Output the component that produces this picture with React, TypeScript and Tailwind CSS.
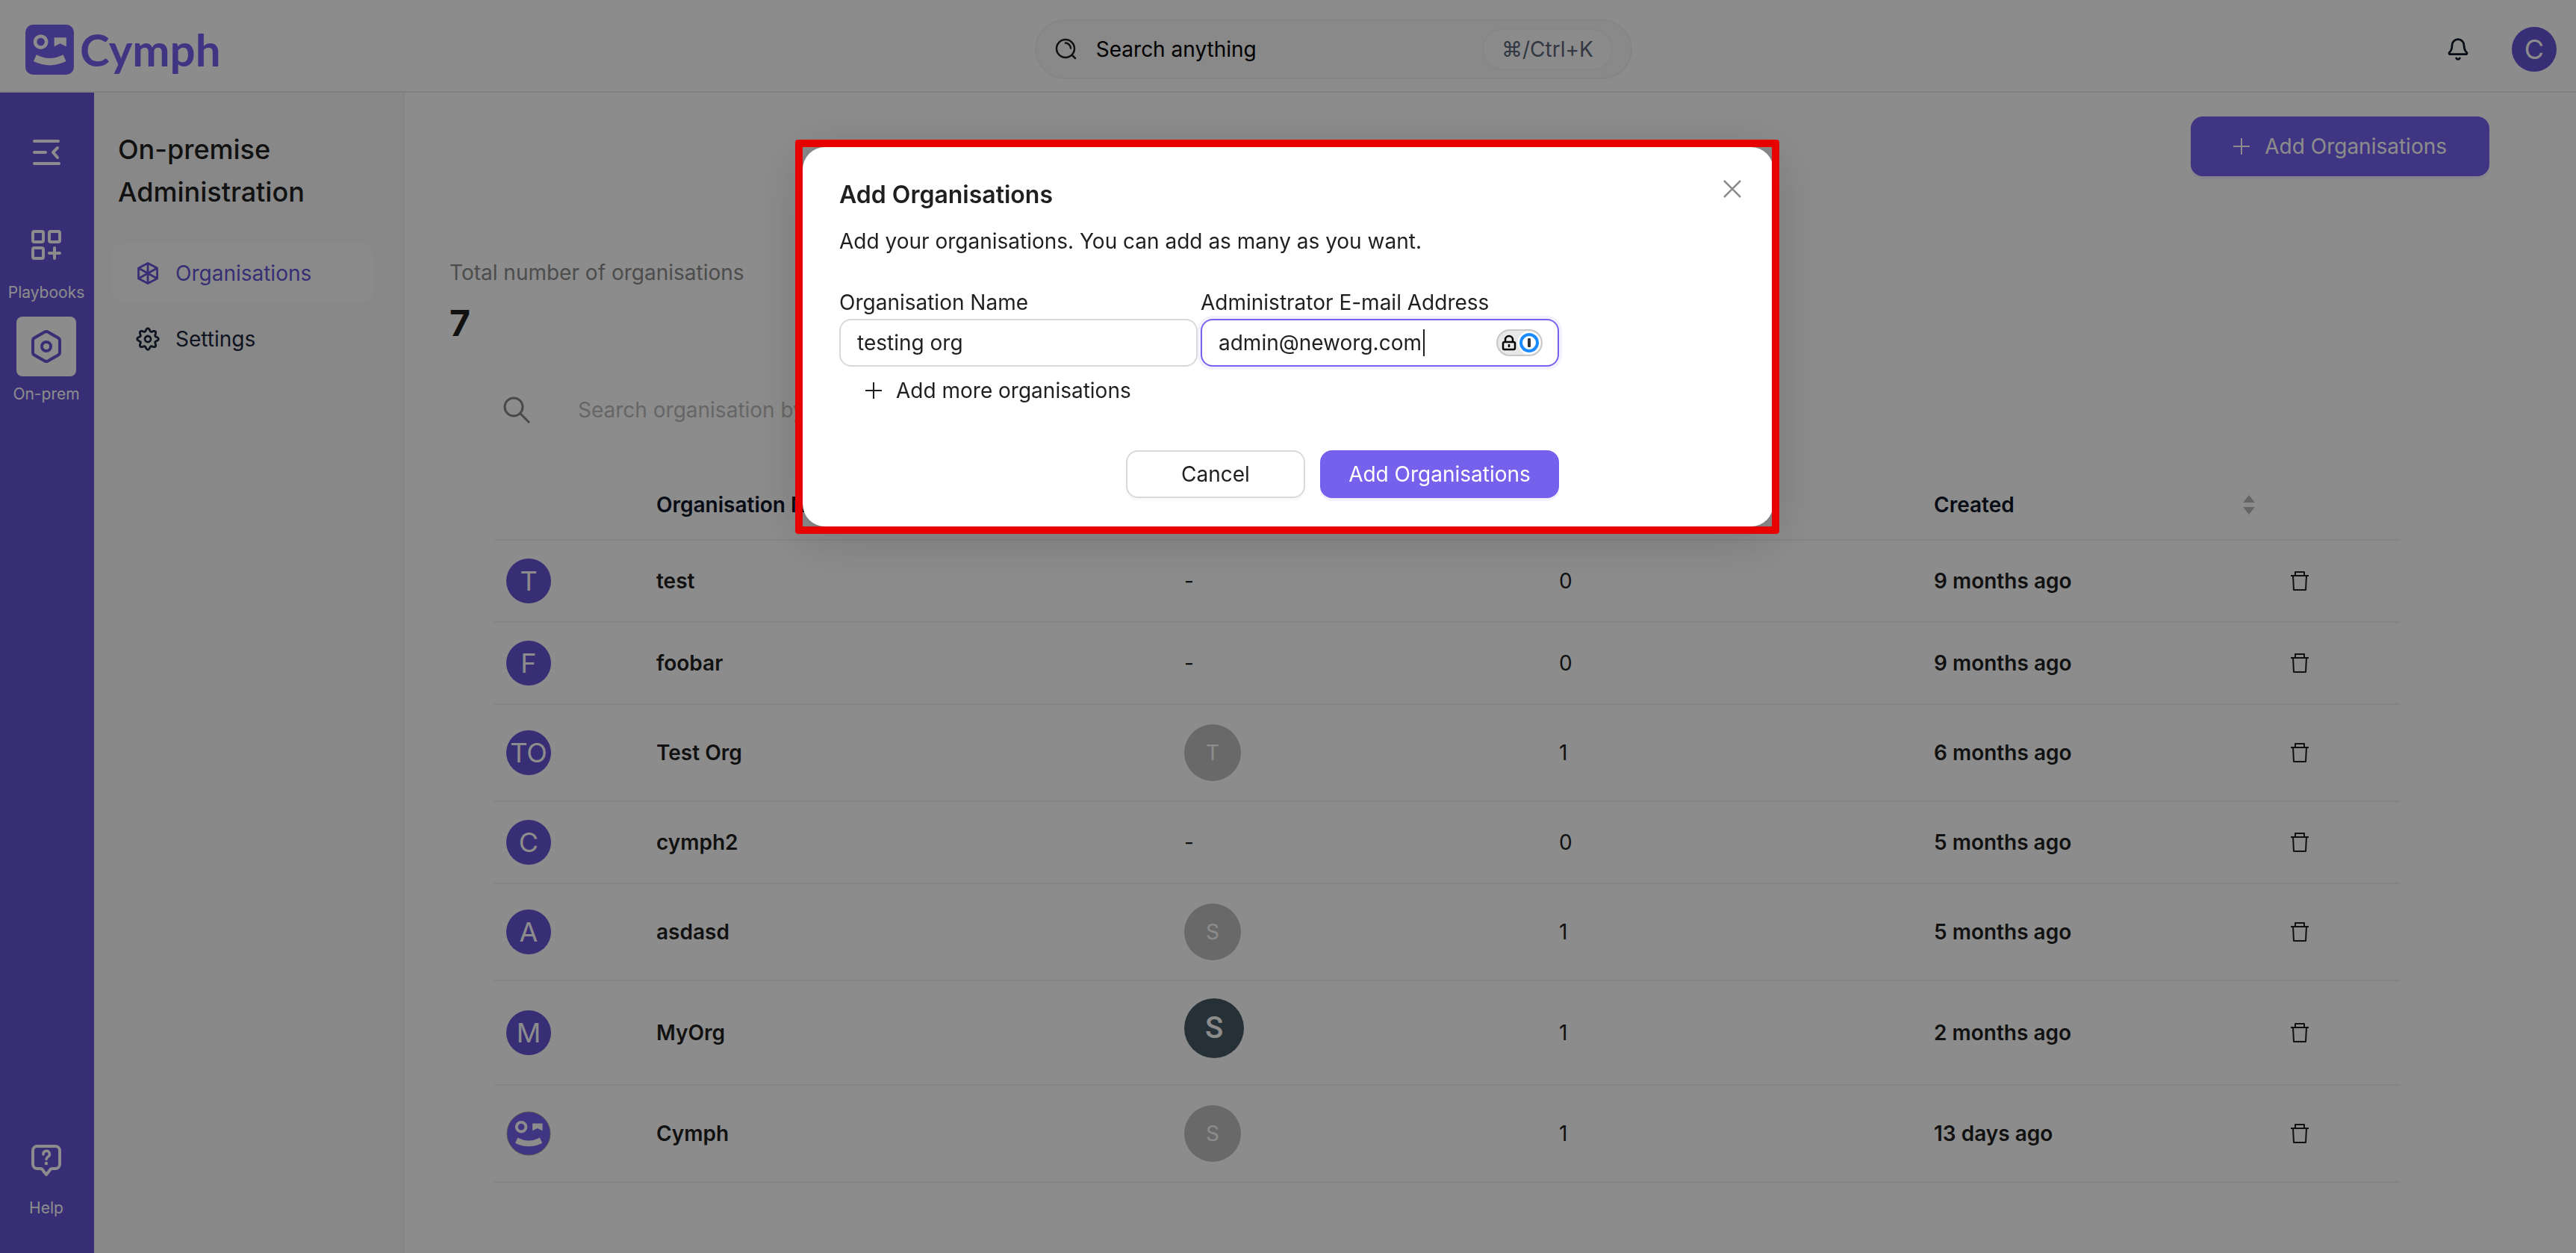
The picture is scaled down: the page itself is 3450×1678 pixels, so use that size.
import { Bell } from 'lucide-react';

type Organisation = {
    name: string;
    initials: string;
    logo?: boolean;
    member?: string;
    photo?: boolean;
    members: number;
    created: string;
    height: string;
};

const organisations: Organisation[] = [
    { name: 'test', initials: 'T', members: 0, created: '9 months ago', height: 'h-[110px]' },
    { name: 'foobar', initials: 'F', members: 0, created: '9 months ago', height: 'h-[110px]' },
    { name: 'Test Org', initials: 'TO', member: 'T', members: 1, created: '6 months ago', height: 'h-[130px]' },
    { name: 'cymph2', initials: 'C', members: 0, created: '5 months ago', height: 'h-[110px]' },
    { name: 'asdasd', initials: 'A', member: 'S', members: 1, created: '5 months ago', height: 'h-[130px]' },
    { name: 'MyOrg', initials: 'M', member: 'S', photo: true, members: 1, created: '2 months ago', height: 'h-[140px]' },
    { name: 'Cymph', initials: 'C', logo: true, member: 'S', members: 1, created: '13 days ago', height: 'h-[130px]' },
];

// eight soft teeth around the gear's rim
const gearPoints = Array.from({ length: 96 }, (_, i) => {
    const angle = (i / 96) * Math.PI * 2;
    const radius = 12.4 + 1.9 * Math.cos(8 * angle);
    return `${(16 + radius * Math.sin(angle)).toFixed(2)},${(16 - radius * Math.cos(angle)).toFixed(2)}`;
}).join(' ');

function Face() {
    return (
        <>
            <circle cx="57" cy="64" r="21" fill="none" stroke="#fff" strokeWidth="13" />
            <path d="M107 48h45v33l-23-11-22 11z" fill="#fff" />
            <path d="M41 112Q90 138 140 112L151 136Q90 166 30 136Z" fill="#fff" />
        </>
    );
}

function FoldIcon() {
    return (
        <svg className="size-10" viewBox="0 0 40 40" fill="none" stroke="currentColor" strokeWidth="4" strokeLinecap="round" strokeLinejoin="round">
            <path d="M4 5h32M4 20h15M4 35h33M35 14l-6 6 6 7" />
        </svg>
    );
}

function PlaybooksIcon() {
    return (
        <svg className="size-10" viewBox="0 0 40 40" fill="none" stroke="currentColor" strokeWidth="4" strokeLinecap="round">
            <rect x="2" y="2" width="14" height="14" rx="2" />
            <rect x="24" y="2" width="14" height="14" rx="2" />
            <rect x="2" y="24" width="14" height="14" rx="2" />
            <path d="M31 24v14M24 31h14" />
        </svg>
    );
}

function OnPremIcon() {
    return (
        <svg className="size-12" viewBox="0 0 24 24" fill="none" stroke="currentColor" strokeWidth="2">
            <path d="M21 16V8a2 2 0 0 0-1-1.73l-7-4a2 2 0 0 0-2 0l-7 4A2 2 0 0 0 3 8v8a2 2 0 0 0 1 1.73l7 4a2 2 0 0 0 2 0l7-4A2 2 0 0 0 21 16z" />
            <circle cx="12" cy="12" r="3" />
        </svg>
    );
}

function HelpIcon() {
    return (
        <svg className="w-10 h-[42px]" viewBox="0 0 40 42" fill="none" stroke="currentColor" strokeWidth="4" strokeLinecap="round" strokeLinejoin="round">
            <path d="M8 2h24a6 6 0 0 1 6 6v18a6 6 0 0 1-6 6h-4c-2 0-3 1-4 3l-4 5-4-5c-1-2-2-3-4-3H8a6 6 0 0 1-6-6V8a6 6 0 0 1 6-6z" />
            <path d="M16 13a4.200 4.200 0 1 1 6.500 3c-1.700 1.200-2.500 1.700-2.500 3.500" strokeWidth="3.500" />
            <circle cx="20" cy="25" r="2.300" fill="currentColor" stroke="none" />
        </svg>
    );
}

function OrganisationsIcon() {
    return (
        <svg className="size-8" viewBox="0 0 32 32" fill="none" stroke="currentColor" strokeWidth="2.800" strokeLinejoin="round">
            <path d="M16 2.500l12.500 6.500v14L16 29.500 3.500 23V9z" />
            <path d="M16 3v26M3.500 9l25 14M28.500 9l-25 14" />
        </svg>
    );
}

function SettingsIcon() {
    return (
        <svg className="size-8" viewBox="0 0 32 32" fill="none" stroke="currentColor" strokeWidth="2.800" strokeLinejoin="round">
            <polygon points={gearPoints} />
            <circle cx="16" cy="16" r="4" />
        </svg>
    );
}

function PlusIcon() {
    return (
        <svg className="size-[22px]" viewBox="0 0 22 22" fill="none" stroke="currentColor" strokeWidth="2">
            <path d="M11 0v22M0 11h22" />
        </svg>
    );
}

function TrashIcon() {
    return (
        <svg className="w-6 h-[26px]" viewBox="0 0 24 26" fill="none" stroke="currentColor" strokeWidth="2" strokeLinejoin="round">
            <path d="M0 6h24M6 6V1h12v5M3 6l1 19h16l1-19" />
        </svg>
    );
}

function Header() {
    return (
        <header className="h-[124px] pt-2.5 pl-[34px] pr-[26px] flex items-center justify-between border-b-2 border-[#ececec] bg-white">
            <a href="#" className="flex items-center gap-2 text-[#7661ed]">
                <svg className="w-[65px] h-[67px]" viewBox="0 0 180 186">
                    <rect width="180" height="186" rx="28" fill="#7661ed" />
                    <Face />
                </svg>
                <span className="font-['Lato'] text-[60px] leading-[64px] font-bold">Cymph</span>
            </a>
            {/* global search */}
            <button className="w-[800px] h-20 pl-6 pr-6 flex items-center rounded-full border-2 border-[#f2f2f2] bg-[#f9f9f9] text-black">
                <svg className="size-8" viewBox="0 0 32 32" fill="none" stroke="#1f1f1f" strokeWidth="2.500" strokeLinecap="round">
                    <circle cx="15" cy="15" r="12" />
                    <path d="M24 24l4 4M15 7.500a7.500 7.500 0 0 1 7 7" />
                </svg>
                <span className="ml-6">Search anything</span>
                <kbd className="ml-auto h-14 px-6 flex items-center rounded-full border-2 border-[#f4f4f4] bg-[#fefefe] font-['Inter','DejaVu_Sans',sans-serif] text-[#5d6578]">⌘/Ctrl+K</kbd>
            </button>
            <div className="flex items-center gap-14">
                <button aria-label="Notifications" className="text-[#0b1427]">
                    <Bell className="size-8" />
                </button>
                <button className="size-[60px] rounded-full bg-[#6655d5] text-white text-4xl">C</button>
            </div>
        </header>
    );
}

function Sidebar() {
    return (
        <nav className="w-[126px] shrink-0 pt-10 pb-11 pr-0.5 flex flex-col items-center bg-[#6655d5] text-white text-[21px] leading-8">
            <button aria-label="Collapse" className="mb-11 size-20 flex items-center justify-center">
                <FoldIcon />
            </button>
            <a href="#" className="mb-4 flex flex-col items-center gap-2">
                <span className="size-20 flex items-center justify-center">
                    <PlaybooksIcon />
                </span>
                Playbooks
            </a>
            <a href="#" className="flex flex-col items-center gap-2">
                <span className="size-20 flex items-center justify-center rounded-lg bg-white text-[#6655d5]">
                    <OnPremIcon />
                </span>
                On-prem
            </a>
            <a href="#" className="mt-auto flex flex-col items-center gap-2">
                <span className="size-20 flex items-center justify-center">
                    <HelpIcon />
                </span>
                Help
            </a>
        </nav>
    );
}

function AdminMenu() {
    return (
        <aside className="w-[416px] shrink-0 px-6 pt-12 border-r-2 border-[#f0f0f0] bg-[#f7f7f7]">
            <h1 className="px-2 text-4xl leading-[57px] font-medium text-[#1f1f1f]">
                On-premise Administration
            </h1>
            <ul className="mt-10 mr-4 flex flex-col gap-2">
                <li>
                    <a href="#" className="h-20 px-8 flex items-center gap-[21px] rounded-2xl bg-[#fcfcfc] text-[#6655d5]">
                        <OrganisationsIcon />
                        Organisations
                    </a>
                </li>
                <li>
                    <a href="#" className="h-20 px-8 flex items-center gap-[21px] text-[#1a253b]">
                        <SettingsIcon />
                        Settings
                    </a>
                </li>
            </ul>
        </aside>
    );
}

function OrganisationsTable() {
    return (
        <table className="w-full table-fixed text-left text-[#1f1f1f]">
            <colgroup>
                <col className="w-[201px]" />
                <col />
                <col className="w-[502px]" />
                <col className="w-[502px]" />
                <col className="w-[462px]" />
                <col className="w-[178px]" />
            </colgroup>
            <thead className="text-[#0b1427]">
                <tr className="h-[94px] border-b-2 border-[#f0f0f0]">
                    <th />
                    <th className="px-4 font-semibold">Organisation Name</th>
                    <th />
                    <th />
                    <th className="px-4 font-semibold">
                        <span className="flex items-center justify-between">
                            Created
                            <svg className="w-4 h-[26px]" viewBox="0 0 16 26" fill="#b8b8b8">
                                <path d="M8 0l8 10H0zM8 26l8-10H0z" />
                            </svg>
                        </span>
                    </th>
                    <th />
                </tr>
            </thead>
            <tbody>
                {organisations.map((org) => (
                    <tr key={org.name} className={`${org.height} border-b-2 border-[#f0f0f0]`}>
                        <td className="px-4">
                            {org.logo ? (
                                <svg className="size-[60px]" viewBox="0 0 60 60">
                                    <circle cx="30" cy="30" r="29" fill="#7661ed" stroke="#9c9c9c" strokeWidth="1" />
                                    <g transform="translate(3 2) scale(.3)">
                                        <Face />
                                    </g>
                                </svg>
                            ) : (
                                <span className="size-[60px] flex items-center justify-center rounded-full bg-[#6655d5] text-white text-4xl">
                                    {org.initials}
                                </span>
                            )}
                        </td>
                        <td className="px-4 font-semibold">{org.name}</td>
                        <td className="px-4">
                            {!org.member && '-'}
                            {org.member && !org.photo && (
                                <span className="size-[76px] flex items-center justify-center rounded-full bg-[#bfbfbf] text-white">
                                    {org.member}
                                </span>
                            )}
                            {org.member && org.photo && (
                                <span className="size-20 mb-3 flex items-center justify-center rounded-full bg-[#455a64] text-white text-[40px] font-medium font-['Roboto']">
                                    {org.member}
                                </span>
                            )}
                        </td>
                        <td className="px-4">{org.members}</td>
                        <td className="px-4 font-semibold">{org.created}</td>
                        <td className="px-8">
                            <button aria-label={`Delete ${org.name}`} className="block">
                                <TrashIcon />
                            </button>
                        </td>
                    </tr>
                ))}
            </tbody>
        </table>
    );
}

function AddOrganisationsModal() {
    return (
        <div className="fixed inset-0 px-4 pt-[197px] flex items-start justify-center bg-black/45">
            <div role="dialog" aria-labelledby="modal-title" className="relative w-[1300px] pl-[49px] pr-12 pt-10 pb-[38px] rounded-[30px] bg-white text-[#1f1f1f] shadow-[0_12px_64px_16px_rgba(0,0,0,0.12)]">
                {/* highlight frame */}
                <div className="absolute -inset-y-2.5 -left-2.5 -right-2 border-10 border-[#e60000] rounded-sm pointer-events-none" />
                <button aria-label="Close" className="absolute top-11 right-[43px] text-[#8c8c8c]">
                    <svg className="size-6" viewBox="0 0 24 24" fill="none" stroke="currentColor" strokeWidth="2.500">
                        <path d="M1 1l22 22M23 1L1 23" />
                    </svg>
                </button>
                <h2 id="modal-title" className="text-[32px] leading-12 font-semibold">Add Organisations</h2>
                <p className="mt-4">Add your organisations. You can add as many as you want.</p>
                <form className="mt-[38px] max-w-[964px]">
                    <div className="flex gap-1">
                        <div className="flex-1">
                            <label htmlFor="org-name" className="block">Organisation Name</label>
                            <input id="org-name" defaultValue="testing org" className="w-full h-16 px-[22px] rounded-2xl border-2 border-[#d9d9d9] outline-none" />
                        </div>
                        <div className="flex-1">
                            <label htmlFor="org-email" className="block">Administrator E-mail Address</label>
                            <div className="relative">
                                <input id="org-email" defaultValue="admin@neworg.com" className="w-full h-16 px-[22px] rounded-2xl border-2 border-[#7661ed] outline-none ring-4 ring-[#f4f1ff]" />
                                <span className="absolute left-[298px] top-3.5 w-0.5 h-9 bg-[#1f1f1f]" />
                                {/* password manager toggle */}
                                <svg className="absolute right-[22px] top-3.5 w-[62px] h-9" viewBox="0 0 62 36" fill="none">
                                    <rect x="1" y="1" width="60" height="34" rx="17" fill="#e8e8e8" stroke="#c8c8c8" strokeWidth="2" />
                                    <circle cx="44" cy="18" r="15.500" fill="#fff" />
                                    <circle cx="44" cy="18" r="11" stroke="#1a8cff" strokeWidth="4" />
                                    <rect x="42" y="12" width="4" height="12" rx="1" fill="#333" />
                                    <rect x="9" y="17" width="16" height="10" rx="2" stroke="#000" strokeWidth="2.500" />
                                    <path d="M12 17v-3a5 5 0 0 1 10 0v3M17 20v4" stroke="#000" strokeWidth="2.500" />
                                </svg>
                            </div>
                        </div>
                    </div>
                    <button type="button" className="h-16 px-[35px] flex items-center gap-[19px]">
                        <PlusIcon />
                        Add more organisations
                    </button>
                    <div className="mt-12 flex justify-end gap-5">
                        <button type="button" className="w-60 h-16 rounded-2xl border-2 border-[#d9d9d9] bg-white shadow-[0_4px_0_rgba(0,0,0,0.02)]">Cancel</button>
                        <button type="submit" className="w-80 h-16 rounded-2xl bg-[#7661ed] text-white shadow-[0_4px_0_#f4f1ff]">Add Organisations</button>
                    </div>
                </form>
            </div>
        </div>
    );
}

function App() {
    return (
        <div className="min-h-screen flex flex-col bg-white font-['Inter',sans-serif] text-[28px] leading-[44px]">
            <Header />
            <div className="grow flex">
                <Sidebar />
                <AdminMenu />
                <main className="grow min-w-0 pt-8 pl-[60px] pr-[116px]">
                    <div className="flex justify-end">
                        <button className="h-20 px-[57px] flex items-center gap-5 rounded-2xl bg-[#7661ed] text-white shadow-[0_4px_0_#f4f1ff]">
                            <PlusIcon />
                            Add Organisations
                        </button>
                    </div>
                    {/* total */}
                    <p className="mt-[107px] text-[#8c8c8c]">Total number of organisations</p>
                    <p className="mt-4 text-5xl leading-[60px] font-bold text-[#1f1f1f]">7</p>
                    {/* table search */}
                    <label className="mt-16 pl-[72px] flex items-center gap-16 text-[#858585]">
                        <svg className="size-9" viewBox="0 0 36 36" fill="none" stroke="currentColor" strokeWidth="3">
                            <circle cx="14" cy="14" r="12" />
                            <path d="M22 22l13 13" />
                        </svg>
                        <input aria-label="Search organisations" placeholder="Search organisation by name" className="w-[600px] outline-none placeholder:text-[#bababa]" />
                    </label>
                    <div className="mt-[58px] ml-[60px] mr-[120px]">
                        <OrganisationsTable />
                    </div>
                </main>
            </div>
            <AddOrganisationsModal />
        </div>
    );
}

export default App;
